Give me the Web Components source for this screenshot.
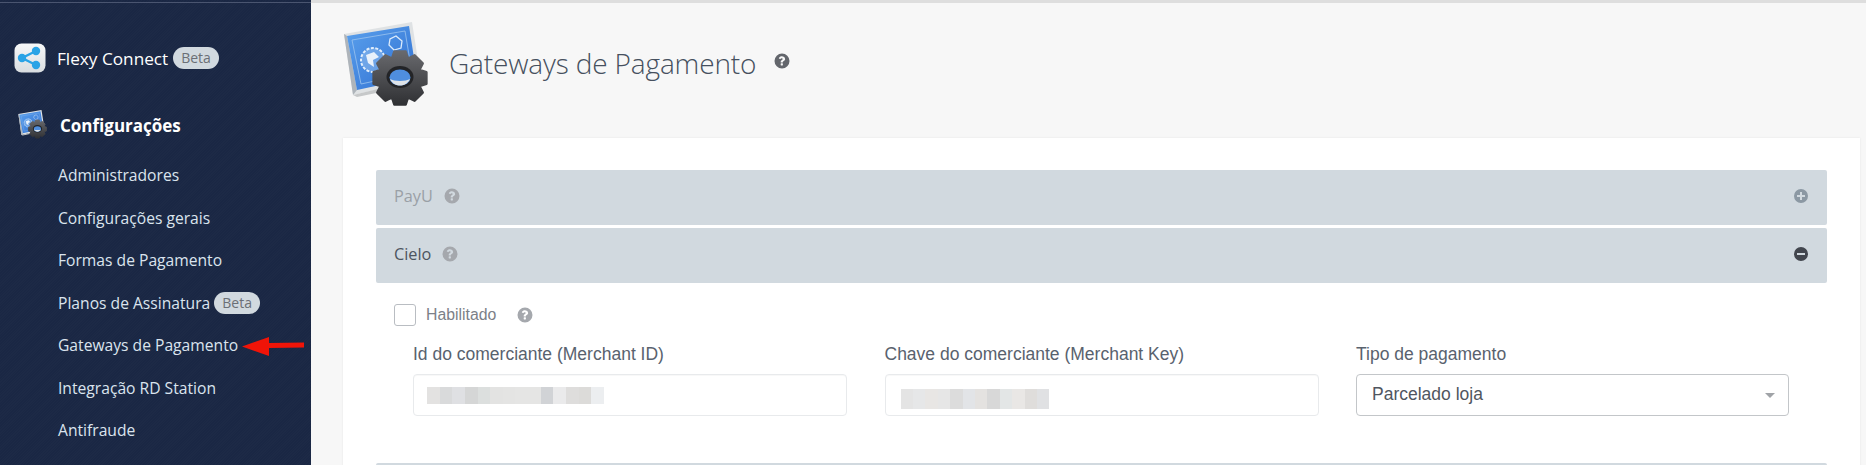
<!DOCTYPE html>
<html lang="pt-BR">
<head>
<meta charset="utf-8">
<title>Gateways de Pagamento</title>
<style>
  html, body { margin: 0; height: 465px; overflow: hidden; background: #f7f7f7; }
</style>
</head>
<body>
<x-app>
  <x-sidebar slot="sidebar">
    <x-nav-group label="Flexy Connect" icon="share" beta></x-nav-group>
    <x-nav-group label="Configurações" icon="config" strong></x-nav-group>
    <x-nav-item>Administradores</x-nav-item>
    <x-nav-item>Configurações gerais</x-nav-item>
    <x-nav-item>Formas de Pagamento</x-nav-item>
    <x-nav-item beta>Planos de Assinatura</x-nav-item>
    <x-nav-item arrow>Gateways de Pagamento</x-nav-item>
    <x-nav-item>Integração RD Station</x-nav-item>
    <x-nav-item>Antifraude</x-nav-item>
  </x-sidebar>
  <x-page-header slot="header">Gateways de Pagamento</x-page-header>
  <x-panel slot="content">
    <x-accordion-head collapsed>PayU</x-accordion-head>
    <x-accordion-head>Cielo</x-accordion-head>
    <x-check-row>Habilitado</x-check-row>
    <x-form-row>
      <x-field label="Id do comerciante (Merchant ID)" blocks="#e3e2e1,#d9dadb,#dfe0e3,#d5d6d6,#dcdfde,#e3e3e2,#e4e4e3,#e5e5e4,#e5e5e4,#d1d3d6,#eaeaeb,#dedddc,#dcdbd9,#eceef0"></x-field>
      <x-field label="Chave do comerciante (Merchant Key)" blocks="#e4e4e4,#e6e7e8,#e8e6e4,#e6e6e6,#dcdcdc,#e2e4e7,#e4e2e0,#d8d8d8,#e3e6e6,#e9e7e5,#dfdddb,#e0e1e3" tall></x-field>
      <x-select label="Tipo de pagamento" value="Parcelado loja"></x-select>
    </x-form-row>
    <x-accordion-head></x-accordion-head>
  </x-panel>
</x-app>

<script>
const HELP_PATH = 'M8 .5a7.5 7.5 0 1 0 0 15 7.5 7.5 0 0 0 0-15zm.9 11.6a.4.4 0 0 1-.4.4H7.1a.4.4 0 0 1-.4-.4v-1.4c0-.2.2-.4.4-.4h1.4c.2 0 .4.2.4.4zm1.9-5c-.3.5-.8.8-1.3 1.1-.4.3-.6.4-.6.8v.2c0 .2-.2.3-.4.3H7.1c-.2 0-.4-.1-.4-.3v-.5c0-1 .7-1.4 1.3-1.8.4-.2.7-.5.7-.9 0-.5-.5-.8-1-.8-.6 0-.9.3-1.3.8-.1.2-.3.2-.5.1l-.9-.7c-.2-.1-.2-.3-.1-.5C5.6 3.800 6.500 3.200 7.900 3.200c1.500 0 3.200 1.100 3.200 2.700 0 .5-.1.900-.3 1.200z';

// ingranaggio a 8 denti, serve solo per l'icona di configurazione
function gearPath(cx, cy, ro, ri, teeth) {
  const pts = [];
  const step = Math.PI * 2 / teeth;
  for (let i = 0; i < teeth; i++) {
    const a = i * step - Math.PI / 2;
    [[-.5, ri], [-.27, ro], [.27, ro], [.5, ri]].forEach(([k, r]) => {
      pts.push((cx + Math.cos(a + k * step) * r).toFixed(1) + ' ' + (cy + Math.sin(a + k * step) * r).toFixed(1));
    });
  }
  return 'M' + pts.join('L') + 'z';
}

class XApp extends HTMLElement {
  constructor() {
    super();
    this.attachShadow({mode: 'open'});
    this.shadowRoot.innerHTML = `
    <style>
      :host { display: grid; grid-template-columns: 311px 1fr; height: 465px; overflow: hidden; font-family: "Open Sans", sans-serif; }
      .main { border-top: 3px solid #dedede; background: #f7f7f7; min-width: 0; }
    </style>
    <slot name="sidebar"></slot>
    <div class="main">
      <slot name="header"></slot>
      <slot name="content"></slot>
    </div>`;
  }
}

class XSidebar extends HTMLElement {
  constructor() {
    super();
    this.attachShadow({mode: 'open'});
    this.shadowRoot.innerHTML = `
    <style>
      :host {
        display: flex; flex-direction: column; box-sizing: border-box; height: 465px; padding-top: 42px;
        background-color: #1a2744;
        background-image:
          linear-gradient(#4a5570, #4a5570),
          repeating-linear-gradient(135deg, rgba(255,255,255,.01) 0 1px, transparent 1px 2px);
        background-size: 100% 1px, auto;
        background-position: 0 2px, 0 0;
        background-repeat: no-repeat, repeat;
      }
    </style>
    <slot></slot>`;
  }
}

class XBadge extends HTMLElement {
  constructor() {
    super();
    this.attachShadow({mode: 'open'});
    this.shadowRoot.innerHTML = `
    <style>
      :host { display: inline-block; background: #d1d9df; color: #6b6f76; border-radius: 11px; font: 400 14px/22px "Open Sans", sans-serif; padding: 0 8px; margin-left: 5px; }
    </style>
    <slot></slot>`;
  }
}

class XNavGroup extends HTMLElement {
  connectedCallback() {
    if (this.shadowRoot) return;
    this.attachShadow({mode: 'open'});
    const strong = this.hasAttribute('strong');
    const icon = this.getAttribute('icon') === 'share' ? `
      <svg width="32" height="30" viewBox="0 0 32 30">
        <defs><linearGradient id="tile" x1="0" y1="0" x2="0" y2="1"><stop offset="0" stop-color="#f7f8f9"/><stop offset="1" stop-color="#d9dde0"/></linearGradient></defs>
        <rect x=".5" y=".5" width="31" height="29" rx="7" fill="url(#tile)"/>
        <path d="M22 8 8 15l14 7" fill="none" stroke="#2aa3e6" stroke-width="2.400"/>
        <circle cx="22" cy="8" r="4.200" fill="#2aa3e6"/><circle cx="8" cy="15" r="4.200" fill="#2aa3e6"/><circle cx="22" cy="22" r="4.200" fill="#2aa3e6"/>
      </svg>` : `<x-config-icon size="30"></x-config-icon>`;
    this.shadowRoot.innerHTML = `
    <style>
      :host { display: flex; align-items: center; color: #fff; font-family: "Open Sans", sans-serif; }
      :host([strong]) { margin-top: 31px; height: 40px; padding-left: 18px; margin-bottom: 9px; font-size: 17px; font-weight: 700; }
      :host(:not([strong])) { height: 32px; padding-left: 14px; font-size: 17.200px; }
      .label { margin-left: ${strong ? '12px' : '11px'}; white-space: nowrap; }
      svg { display: block; }
    </style>
    ${icon}
    <span class="label">${this.getAttribute('label')}</span>
    ${this.hasAttribute('beta') ? '<x-badge>Beta</x-badge>' : ''}`;
  }
}

class XNavItem extends HTMLElement {
  connectedCallback() {
    if (this.shadowRoot) return;
    this.attachShadow({mode: 'open'});
    this.shadowRoot.innerHTML = `
    <style>
      :host { display: flex; align-items: center; height: 42.500px; padding-left: 58px; color: #dbe4ee; font: 400 15.650px "Open Sans", sans-serif; white-space: nowrap; position: relative; }
      x-badge { margin-left: 4px; }
      /* freccia rossa sopra il menu */
      .arrow { position: absolute; left: 242px; top: 13px; }
    </style>
    <slot></slot>
    ${this.hasAttribute('beta') ? '<x-badge>Beta</x-badge>' : ''}
    ${this.hasAttribute('arrow') ? `<svg class="arrow" width="63" height="19" viewBox="0 0 63 19"><path d="M0 9.500 27 0v6l35-.5v5l-35 .5V19z" fill="#f01408"/></svg>` : ''}`;
  }
}

class XConfigIcon extends HTMLElement {
  connectedCallback() {
    if (this.shadowRoot) return;
    this.attachShadow({mode: 'open'});
    const size = this.getAttribute('size') || 88;
    this.shadowRoot.innerHTML = `
    <style>:host { display: block; flex: none; } svg { display: block; filter: blur(.4px); }</style>
    <svg width="${size}" height="${size}" viewBox="0 0 88 88">
      <defs>
        <linearGradient id="screen" x1="0" y1="0" x2="1" y2="1"><stop offset="0" stop-color="#5aa0ec"/><stop offset="1" stop-color="#2f6fd2"/></linearGradient>
        <linearGradient id="steel" x1="0" y1="0" x2="0" y2="1"><stop offset="0" stop-color="#68696d"/><stop offset="1" stop-color="#303134"/></linearGradient>
      </defs>
      <path d="M1 12 69 0l9 58-68 15z" fill="#dfe2e4"/>
      <path d="M1 12l3 2 10 54-4 5z" fill="#aeb4ba"/>
      <path d="M4 14 66 4l8 51-60 13z" fill="url(#screen)"/>
      <path d="M9 18 62 9l7 42-51 11z" fill="none" stroke="#9cc4ef" stroke-width=".8"/>
      <circle cx="30" cy="38" r="12" fill="#a9cdf2" fill-opacity=".4" stroke="#e2eefb" stroke-width="2" stroke-dasharray="3 1.500"/>
      <path d="M23 33l8-3 5 5-6 3 1 7-6-4z" fill="#eaf2fb"/>
      <path d="M53 14l6 5-1 7-7 2-5-5 1-6z" fill="none" stroke="#dcebfb" stroke-width="1.300"/>
      <path d="M10 73l4 2 24-5-3-3z" fill="#c6c8c9"/>
      <path d="${gearPath(57, 56, 27, 21, 8)}" fill="url(#steel)" stroke="url(#steel)" stroke-width="2.500" stroke-linejoin="round"/>
      <ellipse cx="57" cy="55" rx="13.500" ry="11" fill="#232427"/>
      <ellipse cx="57" cy="55.500" rx="10.500" ry="8" fill="#4f8ede"/>
      <path d="M47 57c4 2.500 16 2.500 20 0-2 4-5 6.500-10 6.500S49 61 47 57z" fill="#dfe4e9"/>
    </svg>`;
  }
}

class XHelp extends HTMLElement {
  connectedCallback() {
    if (this.shadowRoot) return;
    this.attachShadow({mode: 'open'});
    const size = this.getAttribute('size') || 16;
    this.shadowRoot.innerHTML = `
    <style>:host { display: inline-block; color: #a5a8ad; width: ${size}px; height: ${size}px; } svg { display: block; }</style>
    <svg width="${size}" height="${size}" viewBox="0 0 16 16"><path d="${HELP_PATH}" fill="currentColor"/></svg>`;
  }
}

class XPageHeader extends HTMLElement {
  constructor() {
    super();
    this.attachShadow({mode: 'open'});
    this.shadowRoot.innerHTML = `
    <style>
      :host { display: flex; align-items: center; height: 135px; box-sizing: border-box; padding: 0 0 0 32px; }
      h1 { font: 300 28px "Open Sans", sans-serif; color: #46505e; margin: 0 0 15px 0; letter-spacing: -.15px; }
      x-help { color: #63666c; margin: 0 0 19px 18px; }
      x-config-icon { margin: 0 18px 9px 0; }
    </style>
    <x-config-icon size="88"></x-config-icon>
    <h1><slot></slot></h1>
    <x-help size="16"></x-help>`;
  }
}

class XPanel extends HTMLElement {
  constructor() {
    super();
    this.attachShadow({mode: 'open'});
    this.shadowRoot.innerHTML = `
    <style>
      :host { display: block; box-sizing: border-box; height: 400px; margin: 0 6px 0 32px; padding: 32px 33px 0 33px; background: #fff; box-shadow: 0 0 2px rgba(0,0,0,.08); }
    </style>
    <slot></slot>`;
  }
}

class XAccordionHead extends HTMLElement {
  connectedCallback() {
    if (this.shadowRoot) return;
    this.attachShadow({mode: 'open'});
    const collapsed = this.hasAttribute('collapsed');
    const sign = collapsed
      ? 'M8 1a7 7 0 1 0 0 14A7 7 0 0 0 8 1zm4 8H9v3H7V9H4V7h3V4h2v3h3z'
      : 'M8 1a7 7 0 1 0 0 14A7 7 0 0 0 8 1zm4 8H4V7h8z';
    this.shadowRoot.innerHTML = `
    <style>
      :host { display: flex; align-items: center; height: 55px; box-sizing: border-box; margin-bottom: 3px; padding: 0 18px 3px; background: #d1d9df; border-radius: 2px; font: 400 16.300px "Open Sans", sans-serif; color: #4d5560; }
      :host([collapsed]) { color: #9aa0a6; }
      x-help { margin-left: 11px; }
      .sign { margin-left: auto; display: block; }
    </style>
    <slot></slot>
    <x-help size="16"></x-help>
    <svg class="sign" width="16" height="16" viewBox="0 0 16 16"><path d="${sign}" fill="${collapsed ? '#8b98a3' : '#42464e'}"/></svg>`;
    if (!this.textContent.trim()) {
      this.shadowRoot.querySelector('x-help').remove();
      this.shadowRoot.querySelector('.sign').remove();
    }
  }
}

class XCheckRow extends HTMLElement {
  constructor() {
    super();
    this.attachShadow({mode: 'open'});
    this.shadowRoot.innerHTML = `
    <style>
      :host { display: flex; align-items: center; margin: 20px 0 0 18px; height: 24px; font: 400 15.800px "Liberation Sans", Arial, sans-serif; color: #7c8087; }
      .box { width: 22px; height: 22px; box-sizing: border-box; border: 1px solid #b9bdc2; border-radius: 3px; background: #fff; margin-right: 10px; }
      x-help { margin-left: 21px; }
    </style>
    <span class="box"></span>
    <slot></slot>
    <x-help size="16"></x-help>`;
  }
}

class XFormRow extends HTMLElement {
  constructor() {
    super();
    this.attachShadow({mode: 'open'});
    this.shadowRoot.innerHTML = `
    <style>
      :host { display: grid; grid-template-columns: 434px 434px 433px; column-gap: 37.500px; margin: 17px 0 0 37px; height: 119px; }
    </style>
    <slot></slot>`;
  }
}

class XField extends HTMLElement {
  connectedCallback() {
    if (this.shadowRoot) return;
    this.attachShadow({mode: 'open'});
    const blocks = this.getAttribute('blocks').split(',').map(c => `<i style="background:${c}"></i>`).join('');
    this.shadowRoot.innerHTML = `
    <style>
      :host { display: block; font: 400 17.500px "Liberation Sans", Arial, sans-serif; color: #59626e; }
      label { display: block; line-height: 20px; margin-bottom: 10px; white-space: nowrap; }
      .input { display: flex; align-items: center; box-sizing: border-box; height: 42px; padding-left: 13px; border: 1px solid #e8eaec; border-radius: 4px; background: #fff; box-shadow: inset 0 1px 1px rgba(0,0,0,.03); }
      .mask { display: flex; height: 17px; }
      :host([tall]) .input { padding-left: 15px; }
      :host([tall]) .mask { height: 20px; margin-top: 8px; }
      i { display: block; width: 12.640px; }
      :host([tall]) i { width: 12.420px; }
    </style>
    <label>${this.getAttribute('label')}</label>
    <div class="input"><div class="mask">${blocks}</div></div>`;
  }
}

class XSelect extends HTMLElement {
  connectedCallback() {
    if (this.shadowRoot) return;
    this.attachShadow({mode: 'open'});
    this.shadowRoot.innerHTML = `
    <style>
      :host { display: block; font: 400 17.500px "Liberation Sans", Arial, sans-serif; color: #59626e; }
      label { display: block; line-height: 20px; margin-bottom: 10px; white-space: nowrap; }
      .select { display: flex; align-items: center; justify-content: space-between; box-sizing: border-box; height: 42px; padding: 0 13px 2px 15px; border: 1px solid #c3c6c9; border-radius: 4px; background: #fff; color: #50565f; }
      .caret { width: 0; height: 0; border: 5px solid transparent; border-top: 5px solid #a0a3a7; border-bottom: 0; margin-top: 3px; }
    </style>
    <label>${this.getAttribute('label')}</label>
    <div class="select"><span>${this.getAttribute('value')}</span><span class="caret"></span></div>`;
  }
}

customElements.define('x-app', XApp);
customElements.define('x-sidebar', XSidebar);
customElements.define('x-badge', XBadge);
customElements.define('x-config-icon', XConfigIcon);
customElements.define('x-help', XHelp);
customElements.define('x-nav-group', XNavGroup);
customElements.define('x-nav-item', XNavItem);
customElements.define('x-page-header', XPageHeader);
customElements.define('x-panel', XPanel);
customElements.define('x-accordion-head', XAccordionHead);
customElements.define('x-check-row', XCheckRow);
customElements.define('x-form-row', XFormRow);
customElements.define('x-field', XField);
customElements.define('x-select', XSelect);
</script>
</body>
</html>
